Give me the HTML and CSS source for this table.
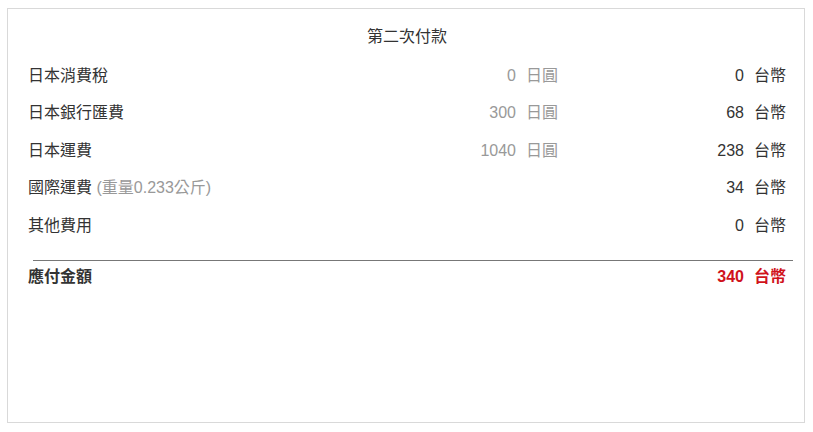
FILE: index.html
```html
<!DOCTYPE html>
<html lang="zh-Hant">
<head>
<meta charset="utf-8">
<link rel="stylesheet" href="styles.css">
</head>
<body>
<div class="panel">
  <div class="title">第二次付款</div>
  <div class="row">
    <div class="label">日本消費稅</div>
    <div class="jnum">0</div><div class="junit">日圓</div>
    <div class="tnum">0</div><div class="tunit">台幣</div>
  </div>
  <div class="row">
    <div class="label">日本銀行匯費</div>
    <div class="jnum">300</div><div class="junit">日圓</div>
    <div class="tnum">68</div><div class="tunit">台幣</div>
  </div>
  <div class="row">
    <div class="label">日本運費</div>
    <div class="jnum">1040</div><div class="junit">日圓</div>
    <div class="tnum">238</div><div class="tunit">台幣</div>
  </div>
  <div class="row">
    <div class="label">國際運費 <span class="note">(重量0.233公斤)</span></div>
    <div class="jnum"></div><div class="junit"></div>
    <div class="tnum">34</div><div class="tunit">台幣</div>
  </div>
  <div class="row">
    <div class="label">其他費用</div>
    <div class="jnum"></div><div class="junit"></div>
    <div class="tnum">0</div><div class="tunit">台幣</div>
  </div>
  <div class="divider"></div>
  <div class="row total">
    <div class="label">應付金額</div>
    <div class="jnum"></div><div class="junit"></div>
    <div class="tnum">340</div><div class="tunit">台幣</div>
  </div>
</div>
</body>
</html>
```
FILE: styles.css
```css
html, body {
  margin: 0;
  padding: 0;
  background: #fff;
}
body {
  padding: 8px 8px 0 7px;
  font-family: "Liberation Sans", "Noto Sans CJK TC", sans-serif;
  font-size: 16px;
  color: #333;
}
.panel {
  width: 798px;
  height: 415px;
  border: 1px solid #d9d9d9;
  padding: 9px 18px 0 20px;
  box-sizing: border-box;
}
.title {
  height: 38.5px;
  line-height: 38.5px;
  text-align: center;
}
.row {
  display: grid;
  grid-template-columns: 1fr 64px 42px 186px 42px;
  height: 37.5px;
  line-height: 37.5px;
  white-space: nowrap;
}
.jnum {
  text-align: right;
  color: #999;
}
.junit {
  padding-left: 10px;
  color: #999;
}
.tnum {
  text-align: right;
}
.tunit {
  padding-left: 10px;
}
.note {
  color: #999;
}
.divider {
  height: 1px;
  background: #777;
  margin: 16px -7px 0 5px;
}
.row.total {
  height: 31px;
  line-height: 31px;
  font-weight: bold;
}
.row.total .tnum,
.row.total .tunit {
  color: #d0121b;
}
```
